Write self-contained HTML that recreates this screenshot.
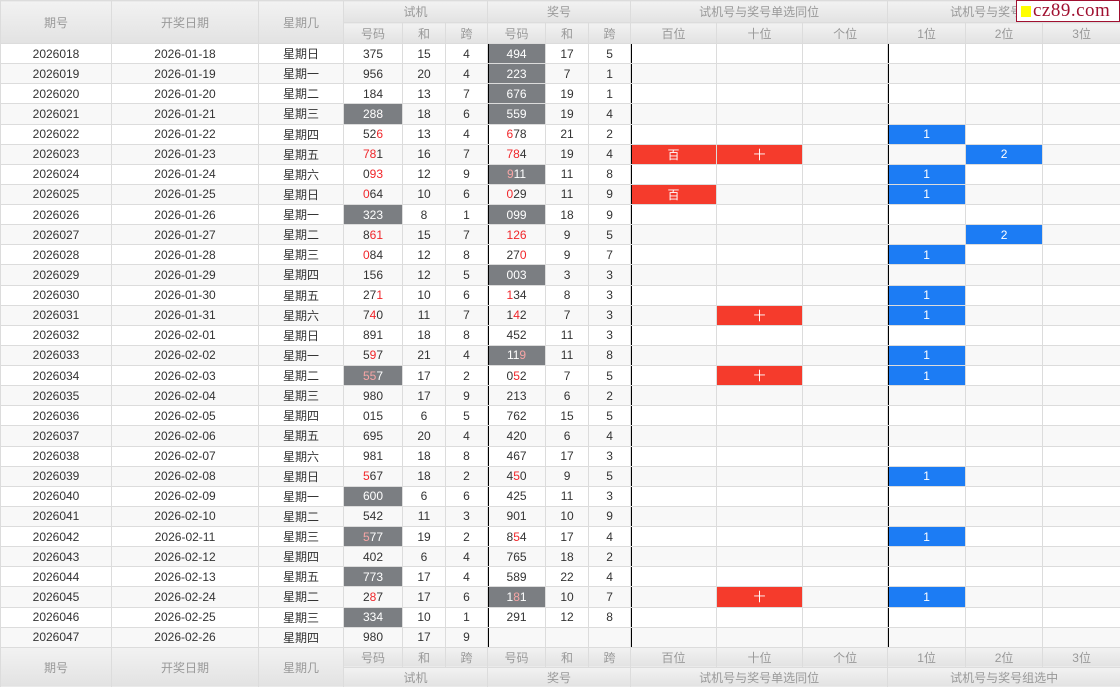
<!DOCTYPE html>
<html><head><meta charset="utf-8">
<style>
html,body{margin:0;padding:0;background:#fff;width:1120px;height:687px;overflow:hidden}
table{border-collapse:collapse;table-layout:fixed;width:1120px;font-family:"Liberation Sans","Noto Sans CJK SC",sans-serif;font-size:12px;color:#333}
td,th{border:1px solid #dcdcdc;text-align:center;padding:0;white-space:nowrap;overflow:hidden}
th{background:linear-gradient(#f2f2f2,#e2e2e2);color:#999;font-weight:normal}
thead tr.a th{height:21px}
thead tr.b th{height:20px}
tbody tr{height:20.13px}
tbody tr:nth-child(even) td{background:#f8f8f8}
tfoot th{height:19px}
tbody td.g{background:#7b7e82!important;color:#fff}
tbody td.g i{color:#f7a5a5}
i{font-style:normal;color:#f0262a}
td.L{box-shadow:inset 1px 0 0 #000}
td.R{background:#f53b2c!important;color:#fff}
td.B{background:#1c7cf4!important;color:#fff}
.logo{position:absolute;left:1016px;top:0;width:102px;height:20px;background:#fff;border:1px solid #a01030;font-family:"Liberation Serif",serif;font-size:19px;color:#a01030;line-height:20px;letter-spacing:0.5px}
.logo b{display:inline-block;width:10px;height:11px;background:#ffff00;margin:0 2px 0 4px;vertical-align:-1px}
</style></head><body>
<table>
<colgroup><col style="width:111px"><col style="width:147px"><col style="width:85px"><col style="width:59px"><col style="width:43px"><col style="width:42px"><col style="width:58px"><col style="width:43px"><col style="width:42px"><col style="width:86px"><col style="width:86px"><col style="width:85px"><col style="width:78px"><col style="width:77px"><col style="width:78px"></colgroup>
<thead>
<tr class="a"><th rowspan="2">期号</th><th rowspan="2">开奖日期</th><th rowspan="2">星期几</th><th colspan="3">试机</th><th colspan="3">奖号</th><th colspan="3">试机号与奖号单选同位</th><th colspan="3">试机号与奖号组选中</th></tr>
<tr class="b"><th>号码</th><th>和</th><th>跨</th><th>号码</th><th>和</th><th>跨</th><th>百位</th><th>十位</th><th>个位</th><th>1位</th><th>2位</th><th>3位</th></tr>
</thead>
<tbody>
<tr><td>2026018</td><td>2026-01-18</td><td>星期日</td><td>375</td><td>15</td><td>4</td><td class="L g">494</td><td>17</td><td>5</td><td class="L"></td><td></td><td></td><td class="L"></td><td></td><td></td></tr>
<tr><td>2026019</td><td>2026-01-19</td><td>星期一</td><td>956</td><td>20</td><td>4</td><td class="L g">223</td><td>7</td><td>1</td><td class="L"></td><td></td><td></td><td class="L"></td><td></td><td></td></tr>
<tr><td>2026020</td><td>2026-01-20</td><td>星期二</td><td>184</td><td>13</td><td>7</td><td class="L g">676</td><td>19</td><td>1</td><td class="L"></td><td></td><td></td><td class="L"></td><td></td><td></td></tr>
<tr><td>2026021</td><td>2026-01-21</td><td>星期三</td><td class="g">288</td><td>18</td><td>6</td><td class="L g">559</td><td>19</td><td>4</td><td class="L"></td><td></td><td></td><td class="L"></td><td></td><td></td></tr>
<tr><td>2026022</td><td>2026-01-22</td><td>星期四</td><td>52<i>6</i></td><td>13</td><td>4</td><td class="L"><i>6</i>78</td><td>21</td><td>2</td><td class="L"></td><td></td><td></td><td class="L B">1</td><td></td><td></td></tr>
<tr><td>2026023</td><td>2026-01-23</td><td>星期五</td><td><i>78</i>1</td><td>16</td><td>7</td><td class="L"><i>78</i>4</td><td>19</td><td>4</td><td class="L R">百</td><td class="R">十</td><td></td><td class="L"></td><td class="B">2</td><td></td></tr>
<tr><td>2026024</td><td>2026-01-24</td><td>星期六</td><td>0<i>93</i></td><td>12</td><td>9</td><td class="L g"><i>9</i>11</td><td>11</td><td>8</td><td class="L"></td><td></td><td></td><td class="L B">1</td><td></td><td></td></tr>
<tr><td>2026025</td><td>2026-01-25</td><td>星期日</td><td><i>0</i>64</td><td>10</td><td>6</td><td class="L"><i>0</i>29</td><td>11</td><td>9</td><td class="L R">百</td><td></td><td></td><td class="L B">1</td><td></td><td></td></tr>
<tr><td>2026026</td><td>2026-01-26</td><td>星期一</td><td class="g">323</td><td>8</td><td>1</td><td class="L g">099</td><td>18</td><td>9</td><td class="L"></td><td></td><td></td><td class="L"></td><td></td><td></td></tr>
<tr><td>2026027</td><td>2026-01-27</td><td>星期二</td><td>8<i>61</i></td><td>15</td><td>7</td><td class="L"><i>126</i></td><td>9</td><td>5</td><td class="L"></td><td></td><td></td><td class="L"></td><td class="B">2</td><td></td></tr>
<tr><td>2026028</td><td>2026-01-28</td><td>星期三</td><td><i>0</i>84</td><td>12</td><td>8</td><td class="L">27<i>0</i></td><td>9</td><td>7</td><td class="L"></td><td></td><td></td><td class="L B">1</td><td></td><td></td></tr>
<tr><td>2026029</td><td>2026-01-29</td><td>星期四</td><td>156</td><td>12</td><td>5</td><td class="L g">003</td><td>3</td><td>3</td><td class="L"></td><td></td><td></td><td class="L"></td><td></td><td></td></tr>
<tr><td>2026030</td><td>2026-01-30</td><td>星期五</td><td>27<i>1</i></td><td>10</td><td>6</td><td class="L"><i>1</i>34</td><td>8</td><td>3</td><td class="L"></td><td></td><td></td><td class="L B">1</td><td></td><td></td></tr>
<tr><td>2026031</td><td>2026-01-31</td><td>星期六</td><td>7<i>4</i>0</td><td>11</td><td>7</td><td class="L">1<i>4</i>2</td><td>7</td><td>3</td><td class="L"></td><td class="R">十</td><td></td><td class="L B">1</td><td></td><td></td></tr>
<tr><td>2026032</td><td>2026-02-01</td><td>星期日</td><td>891</td><td>18</td><td>8</td><td class="L">452</td><td>11</td><td>3</td><td class="L"></td><td></td><td></td><td class="L"></td><td></td><td></td></tr>
<tr><td>2026033</td><td>2026-02-02</td><td>星期一</td><td>5<i>9</i>7</td><td>21</td><td>4</td><td class="L g">11<i>9</i></td><td>11</td><td>8</td><td class="L"></td><td></td><td></td><td class="L B">1</td><td></td><td></td></tr>
<tr><td>2026034</td><td>2026-02-03</td><td>星期二</td><td class="g"><i>55</i>7</td><td>17</td><td>2</td><td class="L">0<i>5</i>2</td><td>7</td><td>5</td><td class="L"></td><td class="R">十</td><td></td><td class="L B">1</td><td></td><td></td></tr>
<tr><td>2026035</td><td>2026-02-04</td><td>星期三</td><td>980</td><td>17</td><td>9</td><td class="L">213</td><td>6</td><td>2</td><td class="L"></td><td></td><td></td><td class="L"></td><td></td><td></td></tr>
<tr><td>2026036</td><td>2026-02-05</td><td>星期四</td><td>015</td><td>6</td><td>5</td><td class="L">762</td><td>15</td><td>5</td><td class="L"></td><td></td><td></td><td class="L"></td><td></td><td></td></tr>
<tr><td>2026037</td><td>2026-02-06</td><td>星期五</td><td>695</td><td>20</td><td>4</td><td class="L">420</td><td>6</td><td>4</td><td class="L"></td><td></td><td></td><td class="L"></td><td></td><td></td></tr>
<tr><td>2026038</td><td>2026-02-07</td><td>星期六</td><td>981</td><td>18</td><td>8</td><td class="L">467</td><td>17</td><td>3</td><td class="L"></td><td></td><td></td><td class="L"></td><td></td><td></td></tr>
<tr><td>2026039</td><td>2026-02-08</td><td>星期日</td><td><i>5</i>67</td><td>18</td><td>2</td><td class="L">4<i>5</i>0</td><td>9</td><td>5</td><td class="L"></td><td></td><td></td><td class="L B">1</td><td></td><td></td></tr>
<tr><td>2026040</td><td>2026-02-09</td><td>星期一</td><td class="g">600</td><td>6</td><td>6</td><td class="L">425</td><td>11</td><td>3</td><td class="L"></td><td></td><td></td><td class="L"></td><td></td><td></td></tr>
<tr><td>2026041</td><td>2026-02-10</td><td>星期二</td><td>542</td><td>11</td><td>3</td><td class="L">901</td><td>10</td><td>9</td><td class="L"></td><td></td><td></td><td class="L"></td><td></td><td></td></tr>
<tr><td>2026042</td><td>2026-02-11</td><td>星期三</td><td class="g"><i>5</i>77</td><td>19</td><td>2</td><td class="L">8<i>5</i>4</td><td>17</td><td>4</td><td class="L"></td><td></td><td></td><td class="L B">1</td><td></td><td></td></tr>
<tr><td>2026043</td><td>2026-02-12</td><td>星期四</td><td>402</td><td>6</td><td>4</td><td class="L">765</td><td>18</td><td>2</td><td class="L"></td><td></td><td></td><td class="L"></td><td></td><td></td></tr>
<tr><td>2026044</td><td>2026-02-13</td><td>星期五</td><td class="g">773</td><td>17</td><td>4</td><td class="L">589</td><td>22</td><td>4</td><td class="L"></td><td></td><td></td><td class="L"></td><td></td><td></td></tr>
<tr><td>2026045</td><td>2026-02-24</td><td>星期二</td><td>2<i>8</i>7</td><td>17</td><td>6</td><td class="L g">1<i>8</i>1</td><td>10</td><td>7</td><td class="L"></td><td class="R">十</td><td></td><td class="L B">1</td><td></td><td></td></tr>
<tr><td>2026046</td><td>2026-02-25</td><td>星期三</td><td class="g">334</td><td>10</td><td>1</td><td class="L">291</td><td>12</td><td>8</td><td class="L"></td><td></td><td></td><td class="L"></td><td></td><td></td></tr>
<tr><td>2026047</td><td>2026-02-26</td><td>星期四</td><td>980</td><td>17</td><td>9</td><td class="L"></td><td></td><td></td><td class="L"></td><td></td><td></td><td class="L"></td><td></td><td></td></tr>
</tbody>
<tfoot>
<tr><th rowspan="2">期号</th><th rowspan="2">开奖日期</th><th rowspan="2">星期几</th><th>号码</th><th>和</th><th>跨</th><th>号码</th><th>和</th><th>跨</th><th>百位</th><th>十位</th><th>个位</th><th>1位</th><th>2位</th><th>3位</th></tr>
<tr><th colspan="3">试机</th><th colspan="3">奖号</th><th colspan="3">试机号与奖号单选同位</th><th colspan="3">试机号与奖号组选中</th></tr>
</tfoot>
</table>
<div class="logo"><b></b>cz89.com</div>
</body></html>
